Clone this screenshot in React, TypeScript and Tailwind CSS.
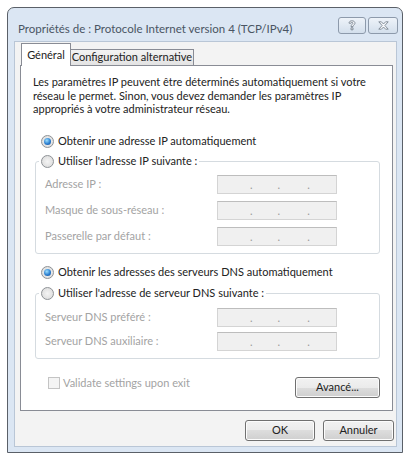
import React from "react";

const Radio: React.FC<{ checked?: boolean }> = ({ checked }) => (
  <span className="w-[13px] h-[13px] shrink-0 rounded-full border border-[#8e9296] bg-[radial-gradient(circle_at_50%_50%,#f4f4f4,#d8d8d8)] flex items-center justify-center">
    {checked && (
      <span className="w-[7px] h-[7px] rounded-full bg-[radial-gradient(circle_at_40%_35%,#9ee0ff,#2b7fd0_55%,#11468f)]" />
    )}
  </span>
);

const IpBox: React.FC = () => (
  <div className="w-[120px] h-[19px] border border-[#d4d4d4] border-t-[#bdbdbd] bg-[#f0f0f0] flex items-center text-[11px] leading-none text-[#9a9a9a]">
    <span className="ml-[32px]">.</span>
    <span className="ml-[25px]">.</span>
    <span className="ml-[27px]">.</span>
  </div>
);

const Field: React.FC<{ label: string }> = ({ label }) => (
  <div className="flex items-center h-[19px]">
    <span className="w-[172px] text-[#a3a3a3]">{label}</span>
    <IpBox />
  </div>
);

const Button: React.FC<{ label: string; w: string }> = ({ label, w }) => (
  <button
    className={`${w} h-[21px] rounded-[3px] border border-[#707070] bg-[linear-gradient(#f2f2f2,#ebebeb_50%,#dddddd_50%,#cfcfcf)] shadow-[inset_0_0_0_1px_#fcfcfc] text-[11px] text-[#222] flex items-center justify-center`}
  >
    {label}
  </button>
);

const App: React.FC = () => {
  return (
    <div className="w-[409px] h-[456px] bg-white pt-[7px] pl-[7px] font-['Lato',sans-serif] text-[11px] text-[#222]">
      <div className="w-[396px] h-[446px] rounded-t-[7px] border border-[#5a6068] bg-[#dbe6f3] flex flex-col">
        {/* title bar */}
        <div className="h-[33px] flex items-start pl-[10px] pr-[4px]">
          <span className="mt-[15px] leading-none text-[11.5px] text-[#4a5563] whitespace-nowrap">
            Propriétés de : Protocole Internet version 4 (TCP/IPv4)
          </span>
          <div className="ml-auto mt-[9px] flex gap-[2px]">
            <div className="w-[28px] h-[17px] rounded-[3px] border border-[#8d9aab] bg-linear-to-b from-[#eef3f9] to-[#d3dfec] flex items-center justify-center">
              <svg width="8" height="11" viewBox="0 0 8 11">
                <path
                  d="M1 3.2 C1 1.4 2.5 0.8 4 0.8 C5.8 0.8 7 1.8 7 3.2 C7 4.6 5.2 5 5 6.6 L3 6.6 C3 4.6 4.9 4.2 4.9 3.2 C4.9 2.7 4.5 2.4 4 2.4 C3.4 2.4 3 2.8 3 3.2 Z M3 7.8 L5 7.8 L5 9.8 L3 9.8 Z"
                  fill="#f5f7fa"
                  stroke="#6f7a86"
                  strokeWidth="0.8"
                />
              </svg>
            </div>
            <div className="w-[30px] h-[17px] rounded-[3px] border border-[#8d9aab] bg-linear-to-b from-[#eef3f9] to-[#d3dfec] flex items-center justify-center">
              <svg width="11" height="9" viewBox="0 0 11 9">
                <path
                  d="M0.8 0.8 L3.4 0.8 L5.5 3 L7.6 0.8 L10.2 0.8 L6.9 4.5 L10.2 8.2 L7.6 8.2 L5.5 6 L3.4 8.2 L0.8 8.2 L4.1 4.5 Z"
                  fill="#f5f7fa"
                  stroke="#6f7a86"
                  strokeWidth="0.8"
                />
              </svg>
            </div>
          </div>
        </div>

        {/* client area */}
        <div className="ml-[6px] mr-[5px] mb-[5px] flex-1 bg-[#f3f3f3] border border-[#b9c6d6] flex flex-col">
          {/* tabs */}
          <div className="h-[24px] flex items-end pl-[6px] whitespace-nowrap">
            <div className="relative z-10 w-[50px] h-[23px] bg-white border border-b-0 border-[#898c95] flex items-start justify-center pt-[3px]">
              Général
            </div>
            <div className="w-[123px] h-[17px] border border-l-0 border-[#898c95] bg-linear-to-b from-[#f3f3f3] to-[#e3e3e3] flex items-center justify-center">
              Configuration alternative
            </div>
          </div>

          {/* panel */}
          <div className="relative -mt-px ml-[5px] w-[373px] h-[346px] bg-white border border-[#898c95] flex flex-col">
            <p className="pl-[12px] pt-[9px] leading-[13.5px] whitespace-nowrap">
              Les paramètres IP peuvent être déterminés automatiquement si votre
              <br />
              réseau le permet. Sinon, vous devez demander les paramètres IP
              <br />
              appropriés à votre administrateur réseau.
            </p>

            <div className="mt-[18px] ml-[20px] h-[16px] flex items-center gap-[4px]">
              <Radio checked />
              <span>Obtenir une adresse IP automatiquement</span>
            </div>

            <fieldset className="mt-[4px] ml-[14px] w-[345px] border border-[#d5dbe0] rounded-[3px] pb-[7px] pl-[9px]">
              <legend className="ml-[-6px] px-[2px] h-[16px] flex items-center gap-[4px]">
                <Radio />
                <span>Utiliser l'adresse IP suivante :</span>
              </legend>
              <div className="mt-[5px] flex flex-col gap-[7px]">
                <Field label="Adresse IP :" />
                <Field label="Masque de sous-réseau :" />
                <Field label="Passerelle par défaut :" />
              </div>
            </fieldset>

            <div className="mt-[11px] ml-[20px] h-[16px] flex items-center gap-[4px]">
              <Radio checked />
              <span>Obtenir les adresses des serveurs DNS automatiquement</span>
            </div>

            <fieldset className="mt-[5px] ml-[14px] w-[345px] border border-[#d5dbe0] rounded-[3px] pb-[7px] pl-[9px]">
              <legend className="ml-[-6px] px-[2px] h-[16px] flex items-center gap-[4px]">
                <Radio />
                <span>Utiliser l'adresse de serveur DNS suivante :</span>
              </legend>
              <div className="mt-[6px] flex flex-col gap-[5px]">
                <Field label="Serveur DNS préféré :" />
                <Field label="Serveur DNS auxiliaire :" />
              </div>
            </fieldset>

            <div className="mt-[18px] ml-[27px] mr-[12px] flex items-start justify-between">
              <div className="flex items-center gap-[3px] h-[13px]">
                <span className="w-[12px] h-[12px] border border-[#c4c4c4] bg-[#f4f4f4]" />
                <span className="text-[#a3a3a3]">Validate settings upon exit</span>
              </div>
              <Button label="Avancé..." w="w-[85px]" />
            </div>
          </div>

          {/* dialog buttons */}
          <div className="mt-[9px] mr-[2px] flex justify-end gap-[8px]">
            <Button label="OK" w="w-[70px]" />
            <Button label="Annuler" w="w-[71px]" />
          </div>
        </div>
      </div>
    </div>
  );
};

export default App;
